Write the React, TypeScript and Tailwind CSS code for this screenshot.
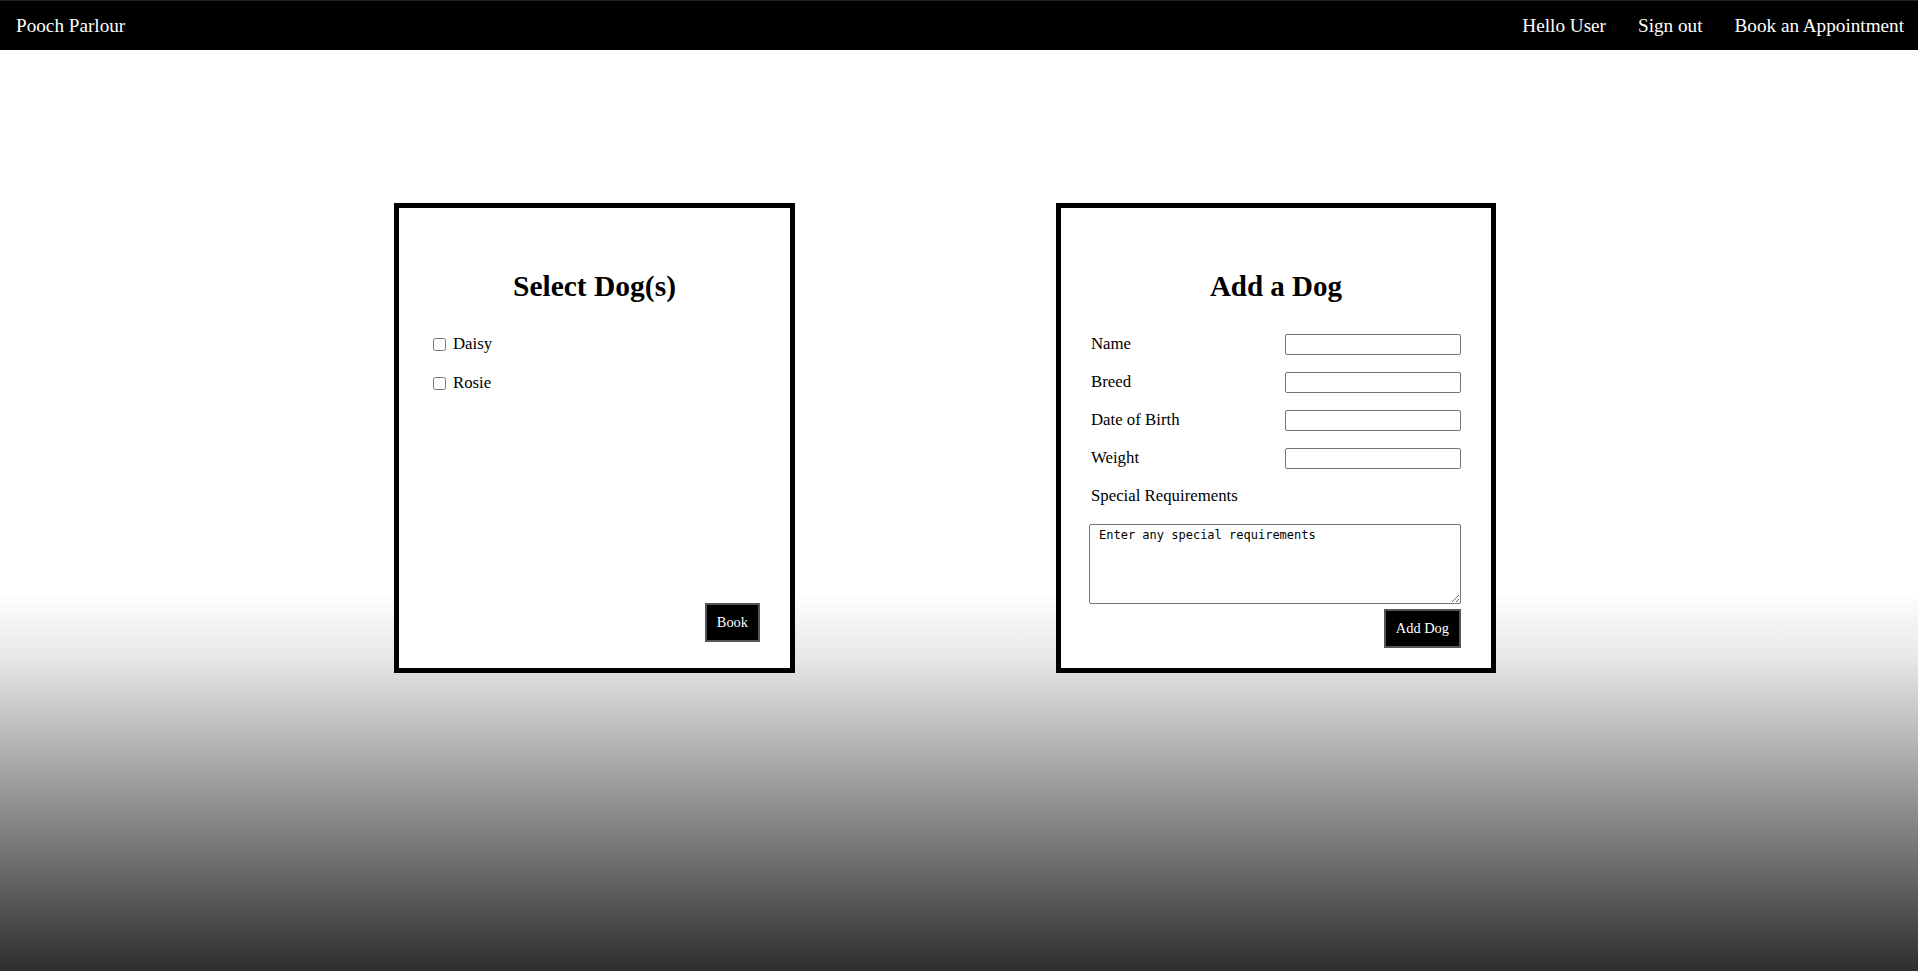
import React from "react";

const serif = { fontFamily: '"Liberation Serif", "Times New Roman", serif' };

const Navbar: React.FC = () => {
  return (
    <div className="h-[50px] bg-black border-t border-[#222] flex items-center justify-between pl-[16px] pr-[14px] pt-[2px] text-white text-[19.2px]">
      <span>Pooch Parlour</span>
      <div className="flex items-center gap-[32px]">
        <span>Hello User</span>
        <span>Sign out</span>
        <span>Book an Appointment</span>
      </div>
    </div>
  );
};

const dogs = ["Daisy", "Rosie"];
const fields = ["Name", "Breed", "Date of Birth", "Weight"];

const SelectDogs: React.FC = () => {
  return (
    <div className="w-[401px] h-[470px] border-[5px] border-black bg-white flex flex-col pt-[64px]">
      <h2 className="text-center font-bold text-[29.5px] leading-[29px] h-[29px]">Select Dog(s)</h2>
      <div className="mt-[33px] pl-[34px] flex flex-col gap-[19px] text-[16.8px]">
        {dogs.map((d) => (
          <label key={d} className="flex items-center h-[20px] leading-[20px]">
            <input type="checkbox" className="m-0 w-[13px] h-[13px]" />
            <span className="ml-[7px]">{d}</span>
          </label>
        ))}
      </div>
      <button className="mt-auto self-end mr-[30px] mb-[26px] h-[39px] px-[10px] bg-black text-white text-[14.4px] border-2 border-[#555]">
        Book
      </button>
    </div>
  );
};

const AddDog: React.FC = () => {
  return (
    <div className="w-[440px] h-[470px] border-[5px] border-black bg-white flex flex-col pt-[64px] px-[30px]">
      <h2 className="text-center font-bold text-[29px] leading-[29px] h-[29px]">Add a Dog</h2>
      <div className="mt-[33px] flex flex-col gap-[17px] text-[16.8px]">
        {fields.map((f) => (
          <div key={f} className="flex items-start justify-between h-[21px]">
            <span className="leading-[19px]">{f}</span>
            <input type="text" className="w-[176px] h-[21px] border border-[#767676] rounded-[2px]" />
          </div>
        ))}
        <span className="leading-[19px]">Special Requirements</span>
      </div>
      <textarea
        defaultValue="Enter any special requirements"
        className="mt-[19px] -ml-[2px] w-[372px] h-[80px] border border-[#767676] rounded-[2px] px-[9px] py-[3px] text-[12px] leading-[14px] text-black"
        style={{ fontFamily: '"DejaVu Sans Mono", monospace' }}
      />
      <button className="mt-[5px] self-end h-[39px] px-[10px] bg-black text-white text-[14.4px] border-2 border-[#555]">
        Add Dog
      </button>
    </div>
  );
};

const App: React.FC = () => {
  return (
    <div
      className="min-h-screen bg-[linear-gradient(to_bottom,#ffffff_61%,#e6e6e6_68%,#2e2e2e_100%)] text-black"
      style={serif}
    >
      <Navbar />
      <div className="flex items-start pl-[394px] gap-[261px] mt-[153px]">
        <SelectDogs />
        <AddDog />
      </div>
    </div>
  );
};

export default App;
